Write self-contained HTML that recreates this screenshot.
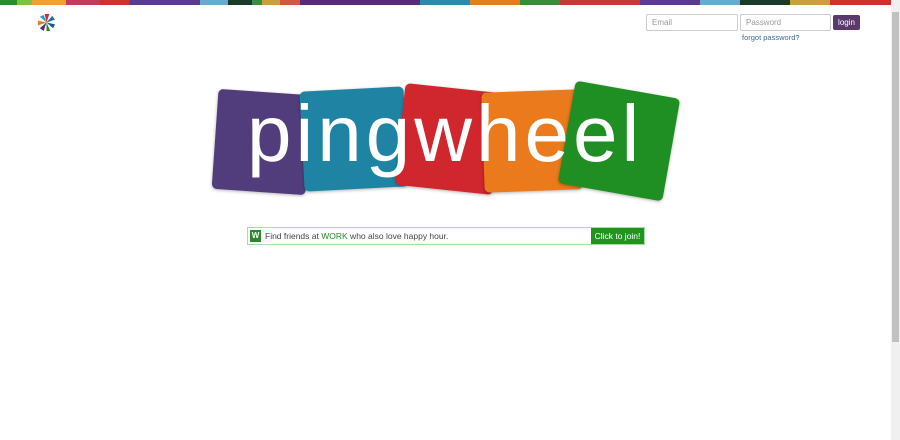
<!DOCTYPE html>
<html><head><style>
body{margin:0;width:900px;height:440px;background:#fff;font-family:"Liberation Sans",sans-serif;position:relative;overflow:hidden}
.stripe{position:absolute;top:0;left:0;width:891px;height:5px;background:linear-gradient(90deg,#2e8b2e 0 17px,#7cc242 17px 32px,#f0a030 32px 66px,#c43a5a 66px 100px,#d0302e 100px 130px,#5a3a8a 130px 200px,#6aaad0 200px 228px,#1a3a2a 228px 252px,#3a8a4a 252px 262px,#c8a040 262px 280px,#d05a40 280px 300px,#5a2a7a 300px 420px,#2a8aaa 420px 470px,#e08020 470px 520px,#3a8a3a 520px 560px,#c83a3a 560px 640px,#5a3a8a 640px 700px,#6aaad0 700px 740px,#1a3a2a 740px 790px,#c8a040 790px 830px,#d0302e 830px 891px)}
.sb{position:absolute;right:0;top:0;width:9px;height:440px;background:#f0f0f0}
.sb i{position:absolute;left:1px;top:12px;width:7px;height:330px;background:#c1c1c1}
input{position:absolute;top:14px;height:15px;border:1px solid #ccc;border-radius:2px;font:8px "Liberation Sans",sans-serif;color:#999;padding:0 5px;box-sizing:content-box}
.btn{position:absolute;left:833px;top:15px;width:27px;height:15px;background:#5a3a6a;color:#fff;font-size:8px;text-align:center;line-height:15px;border-radius:2px}
.fp{position:absolute;left:742px;top:33px;font-size:7.5px;color:#3a6a9a}
.t{position:absolute;border-radius:5px;box-shadow:0 1px 3px rgba(0,0,0,.3)}
.logo{position:absolute;left:247px;top:94px;font-size:80px;color:#fff;letter-spacing:4px;font-family:"Liberation Sans",sans-serif;line-height:1}
.bar{position:absolute;left:247px;top:227px;width:396px;height:16px;border:1px solid #a8dca8;font-size:8.5px;color:#444}
.bar b{position:absolute;left:2px;top:2px;width:11px;height:12px;background:#2a8a2a;color:#fff;font-size:8px;text-align:center;line-height:12px}
.bar span.tx{position:absolute;left:17px;top:3px}
.bar .j{position:absolute;right:0;top:0;width:53px;height:16px;background:#23931f;color:#fff;text-align:center;line-height:16px;font-size:8.5px}
</style></head><body>
<div class="stripe"></div>
<div class="sb"><i></i></div>
<svg style="position:absolute;left:37px;top:13px" width="19" height="19" viewBox="-10 -10 20 20">
<g><path d="M0 0 L-2 -9 L3 -9Z" fill="#d03030"/><path d="M0 0 L6 -7 L9 -3Z" fill="#2a6aa0"/><path d="M0 0 L9 2 L7 6Z" fill="#1a5a8a"/><path d="M0 0 L4 9 L0 9Z" fill="#2a8a2a"/><path d="M0 0 L-3 9 L-7 6Z" fill="#5a2a7a"/><path d="M0 0 L-9 3 L-9 -2Z" fill="#e08020"/><path d="M0 0 L-7 -6 L-3 -8Z" fill="#2a9aba"/></g></svg>
<input style="left:646px;width:80px" value="Email">
<input style="left:740px;width:79px" value="Password">
<div class="btn">login</div>
<div class="fp">forgot password?</div>
<div class="t" style="left:215px;top:92px;width:94px;height:100px;background:#523d7c;transform:rotate(4deg)"></div>
<div class="t" style="left:302px;top:89px;width:104px;height:100px;background:#1f84a3;transform:rotate(-3deg)"></div>
<div class="t" style="left:400px;top:88px;width:98px;height:102px;background:#d0262d;transform:rotate(6deg)"></div>
<div class="t" style="left:483px;top:91px;width:98px;height:100px;background:#ea7a1c;transform:rotate(-2deg)"></div>
<div class="t" style="left:566px;top:89px;width:106px;height:104px;background:#1f8e23;transform:rotate(10deg)"></div>
<div class="logo">pingwheel</div>
<div class="bar"><b>W</b><span class="tx">Find friends at <span style="color:#2a8a2a">WORK</span> who also love happy hour.</span><span class="j">Click to join!</span></div>
</body></html>
